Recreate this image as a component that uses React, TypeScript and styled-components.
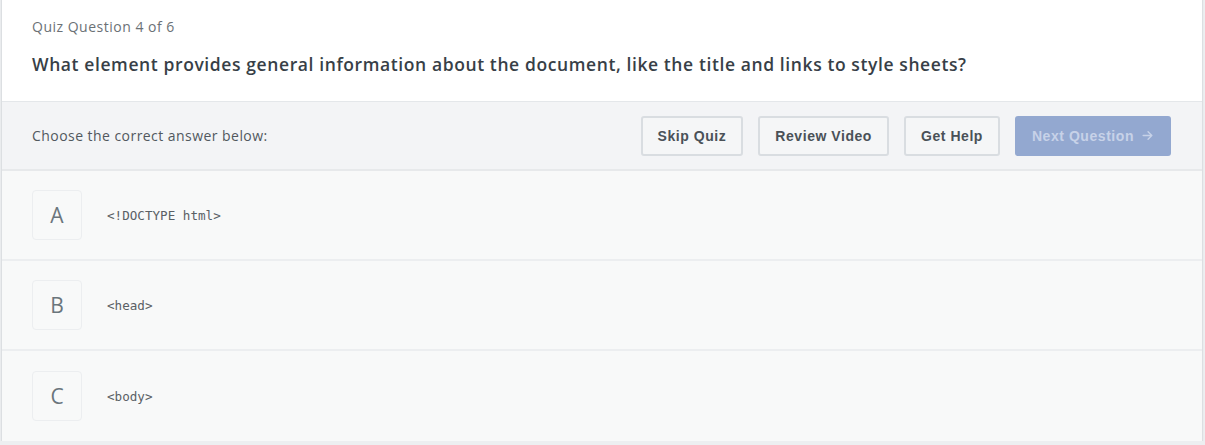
import React from "react";
import styled, { createGlobalStyle } from "styled-components";

const Global = createGlobalStyle`
  html, body { margin: 0; padding: 0; background: #edeff1; }
  body { font-family: "Open Sans", "Liberation Sans", sans-serif; }
  * { box-sizing: border-box; }
`;

const Page = styled.div`
  padding: 0 3px 0 2px;
`;

const Card = styled.div`
  width: 1200px;
  background: #f8f9f9;
  box-shadow: 0 1px 1px 1px #dcdfe2;
`;

const Header = styled.header`
  background: #fff;
  padding: 18px 30px 0 30px;
  height: 102px;
  border-bottom: 1px solid #e4e7ea;
`;

const Eyebrow = styled.div`
  font-family: "Open Sans", sans-serif;
  font-size: 14px;
  letter-spacing: 0.5px;
  color: #6b7176;
  line-height: 18px;
`;

const Question = styled.h1`
  margin: 16px 0 0 0;
  font-family: "Open Sans", sans-serif;
  font-weight: 600;
  font-size: 17.5px;
  letter-spacing: 0.6px;
  line-height: 24px;
  color: #383f47;
`;

const Toolbar = styled.div`
  display: flex;
  align-items: center;
  height: 69px;
  padding: 0 31px 0 30px;
  background: #f3f4f6;
  border-bottom: 2px solid #e7e9eb;
`;

const Prompt = styled.div`
  flex: 1;
  font-family: "Open Sans", sans-serif;
  font-size: 14px;
  letter-spacing: 0.45px;
  color: #51585e;
`;

const Actions = styled.div`
  display: flex;
  gap: 15px;
`;

const Button = styled.button<{ $primary?: boolean }>`
  height: 40px;
  padding: 0 ${(p) => (p.$primary ? "17px" : "15px")};
  border-radius: 3px;
  border: ${(p) => (p.$primary ? "none" : "2px solid #d9dde1")};
  background: ${(p) => (p.$primary ? "#93a8d0" : "#f5f6f7")};
  color: ${(p) => (p.$primary ? "#c7d2e8" : "#4a5157")};
  font-family: "Liberation Sans", Arial, sans-serif;
  font-weight: 700;
  font-size: 14px;
  letter-spacing: ${(p) => (p.$primary ? "0.55px" : "0.55px")};
  display: flex;
  align-items: center;
  gap: 7px;
  cursor: pointer;
`;

const Row = styled.div<{ $last?: boolean }>`
  display: flex;
  align-items: center;
  height: 90px;
  padding: 0 30px;
  border-bottom: ${(p) => (p.$last ? "none" : "2px solid #eceef0")};
`;

const Letter = styled.div`
  width: 50px;
  height: 50px;
  border: 1px solid #eceef0;
  border-radius: 4px;
  display: flex;
  align-items: center;
  justify-content: center;
  font-family: "Open Sans", sans-serif;
  font-weight: 500;
  font-size: 21px;
  color: #6a757c;
  margin-right: 25px;
`;

const Code = styled.code`
  font-family: "DejaVu Sans Mono", monospace;
  font-size: 12.6px;
  color: #5a6065;
`;

const answers = ["<!DOCTYPE html>", "<head>", "<body>"];

export default function App() {
  return (
    <Page>
      <Global />
      <Card>
        <Header>
          <Eyebrow>Quiz Question 4 of 6</Eyebrow>
          <Question>
            What element provides general information about the document, like the title and links to style sheets?
          </Question>
        </Header>
        <Toolbar>
          <Prompt>Choose the correct answer below:</Prompt>
          <Actions>
            <Button>Skip Quiz</Button>
            <Button>Review Video</Button>
            <Button>Get Help</Button>
            <Button $primary>
              Next Question
              <svg width="13" height="13" viewBox="0 0 24 24" fill="none" stroke="currentColor" strokeWidth="2.6" strokeLinecap="round" strokeLinejoin="round">
                <path d="M4 12h16M13 5l7 7-7 7" />
              </svg>
            </Button>
          </Actions>
        </Toolbar>
        {answers.map((a, i) => (
          <Row key={a} $last={i === answers.length - 1}>
            <Letter>{"ABC"[i]}</Letter>
            <Code>{a}</Code>
          </Row>
        ))}
      </Card>
    </Page>
  );
}
